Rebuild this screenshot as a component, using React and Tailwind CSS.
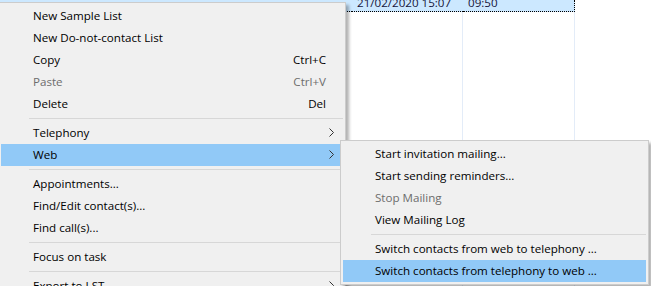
import React from "react";

const font = { fontFamily: '"Open Sans", "Noto Sans", "Liberation Sans", sans-serif' };

function Chevron() {
  return (
    <svg width="5" height="9" viewBox="0 0 5 9" className="shrink-0">
      <path d="M0.5 0.5 L4.5 4.5 L0.5 8.5" fill="none" stroke="#333333" strokeWidth="1" />
    </svg>
  );
}

function Item({ label, shortcut, disabled, arrow, active }) {
  return (
    <div
      className={`flex h-[22px] items-center pl-[32px] pb-px ${active ? "bg-[#91c9f7]" : ""} ${
        disabled ? "text-[#6d6d6d]" : "text-black"
      }`}
    >
      <span className="flex-1 whitespace-nowrap">{label}</span>
      {shortcut && <span className="mr-[17px] whitespace-nowrap">{shortcut}</span>}
      {arrow && (
        <span className="mr-[9px] flex items-center">
          <Chevron />
        </span>
      )}
    </div>
  );
}

function Separator() {
  return (
    <div className="py-[3px] pl-[28px]">
      <div className="h-px bg-[#d7d7d7]" />
    </div>
  );
}

export default function App() {
  return (
    <div className="relative h-[286px] w-[651px] overflow-hidden bg-white text-[11.6px]" style={font}>
      {/* list view behind the menus */}
      <div className="grid h-full grid-cols-[352px_111px_112px_1fr] grid-rows-[12px_1fr] text-[#14143a]">
        <div className="border-b border-dotted border-black bg-[#cce8ff]" />
        <div className="overflow-hidden border-b border-dotted border-black bg-[#cce8ff] pl-[5px] leading-[12px]">
          <div className="-mt-[3px] whitespace-nowrap">21/02/2020 15:07</div>
        </div>
        <div className="overflow-hidden border-b border-r border-dotted border-black bg-[#cce8ff] pl-[5px] leading-[12px]">
          <div className="-mt-[3px] whitespace-nowrap">09:50</div>
        </div>
        <div />
        <div />
        <div className="border-r border-[#e3ecf8]" />
        <div className="border-r border-[#e3ecf8]" />
        <div />
      </div>

      {/* main context menu */}
      <div className="absolute left-[-2px] top-[2px] w-[348px] border border-[#cccccc] bg-[#f0f0f0] p-[2px] shadow-[3px_3px_3px_rgba(0,0,0,0.3)]">
        <Item label="New Sample List" />
        <Item label="New Do-not-contact List" />
        <Item label="Copy" shortcut="Ctrl+C" />
        <Item label="Paste" shortcut="Ctrl+V" disabled />
        <Item label="Delete" shortcut="Del" />
        <Separator />
        <Item label="Telephony" arrow />
        <Item label="Web" arrow active />
        <Separator />
        <Item label="Appointments..." />
        <Item label="Find/Edit contact(s)..." />
        <Item label="Find call(s)..." />
        <Separator />
        <Item label="Focus on task" />
        <Separator />
        <Item label="Export to LST" arrow />
      </div>

      {/* Web submenu */}
      <div className="absolute left-[340px] top-[140px] w-[309px] border border-[#cccccc] bg-[#f0f0f0] p-[2px] shadow-[3px_3px_3px_rgba(0,0,0,0.3)]">
        <Item label="Start invitation mailing..." />
        <Item label="Start sending reminders..." />
        <Item label="Stop Mailing" disabled />
        <Item label="View Mailing Log" />
        <Separator />
        <Item label="Switch contacts from web to telephony ..." />
        <Item label="Switch contacts from telephony to web ..." active />
      </div>
    </div>
  );
}
